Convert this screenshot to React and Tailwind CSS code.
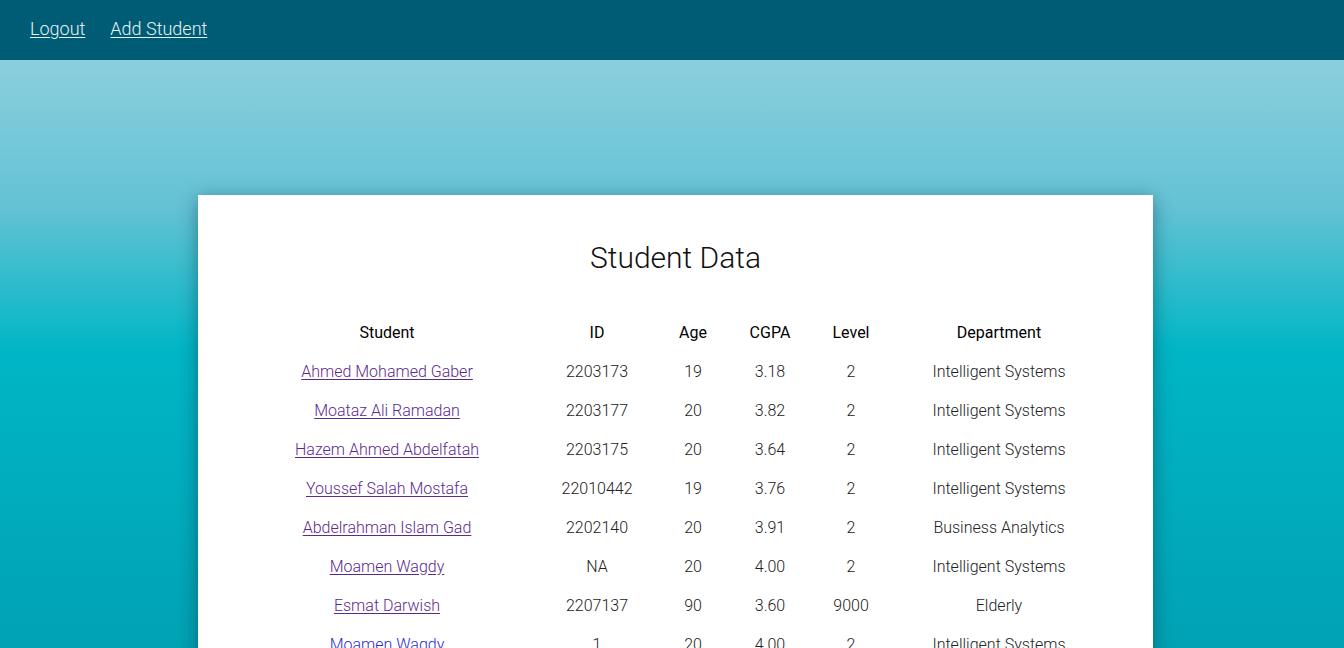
const STUDENTS = [
  { name: 'Ahmed Mohamed Gaber', id: '2203173', age: 19, cgpa: '3.18', level: 2, dept: 'Intelligent Systems' },
  { name: 'Moataz Ali Ramadan', id: '2203177', age: 20, cgpa: '3.82', level: 2, dept: 'Intelligent Systems' },
  { name: 'Hazem Ahmed Abdelfatah', id: '2203175', age: 20, cgpa: '3.64', level: 2, dept: 'Intelligent Systems' },
  { name: 'Youssef Salah Mostafa', id: '22010442', age: 19, cgpa: '3.76', level: 2, dept: 'Intelligent Systems' },
  { name: 'Abdelrahman Islam Gad', id: '2202140', age: 20, cgpa: '3.91', level: 2, dept: 'Business Analytics' },
  { name: 'Moamen Wagdy', id: 'NA', age: 20, cgpa: '4.00', level: 2, dept: 'Intelligent Systems' },
  { name: 'Esmat Darwish', id: '2207137', age: 90, cgpa: '3.60', level: 9000, dept: 'Elderly' },
  { name: 'Moamen Wagdy', id: '1', age: 20, cgpa: '4.00', level: 2, dept: 'Intelligent Systems', fresh: true },
];

const COLUMNS = ['Student', 'ID', 'Age', 'CGPA', 'Level', 'Department'];

export default function App() {
  return (
    <div className="min-h-screen font-['Roboto',sans-serif] font-light">
      {/* Nav */}
      <nav className="h-[60px] bg-[#005c75] flex items-center gap-[25px] px-[30px] pb-[3px] text-[18px] text-[#e6f3f7]">
        <a href="#" className="underline underline-offset-2">Logout</a>
        <a href="#" className="underline underline-offset-2">Add Student</a>
      </nav>

      <main className="h-[588px] overflow-hidden pt-[135px] bg-[linear-gradient(to_bottom,#8bcfdd_0px,#62c2d4_150px,#00b6c6_290px,#00a1b3_600px)]">
        <div className="ml-[198px] w-[955px] bg-white shadow-[0_4px_18px_rgba(0,40,60,0.45)] pt-[40px] pb-10">
          <h1 className="text-center text-[30px] leading-[46px] text-[#111]">Student Data</h1>

          <table className="table-fixed ml-[37px] mt-[32px] text-[16px] text-center">
            <colgroup>
              <col className="w-[304px]" />
              <col className="w-[116px]" />
              <col className="w-[76px]" />
              <col className="w-[78px]" />
              <col className="w-[84px]" />
              <col className="w-[212px]" />
            </colgroup>
            <thead>
              <tr className="h-[39px]">
                {COLUMNS.map((c) => (
                  <th key={c} className="font-normal text-black">{c}</th>
                ))}
              </tr>
            </thead>
            <tbody className="text-[#222]">
              {STUDENTS.map((s, i) => (
                <tr key={i} className="h-[39px]">
                  <td>
                    <a
                      href="#"
                      className={`underline underline-offset-2 ${s.fresh ? 'text-[#2b2bd6]' : 'text-[#5b2a8f]'}`}
                    >
                      {s.name}
                    </a>
                  </td>
                  <td>{s.id}</td>
                  <td>{s.age}</td>
                  <td>{s.cgpa}</td>
                  <td>{s.level}</td>
                  <td>{s.dept}</td>
                </tr>
              ))}
            </tbody>
          </table>
        </div>
      </main>
    </div>
  );
}
